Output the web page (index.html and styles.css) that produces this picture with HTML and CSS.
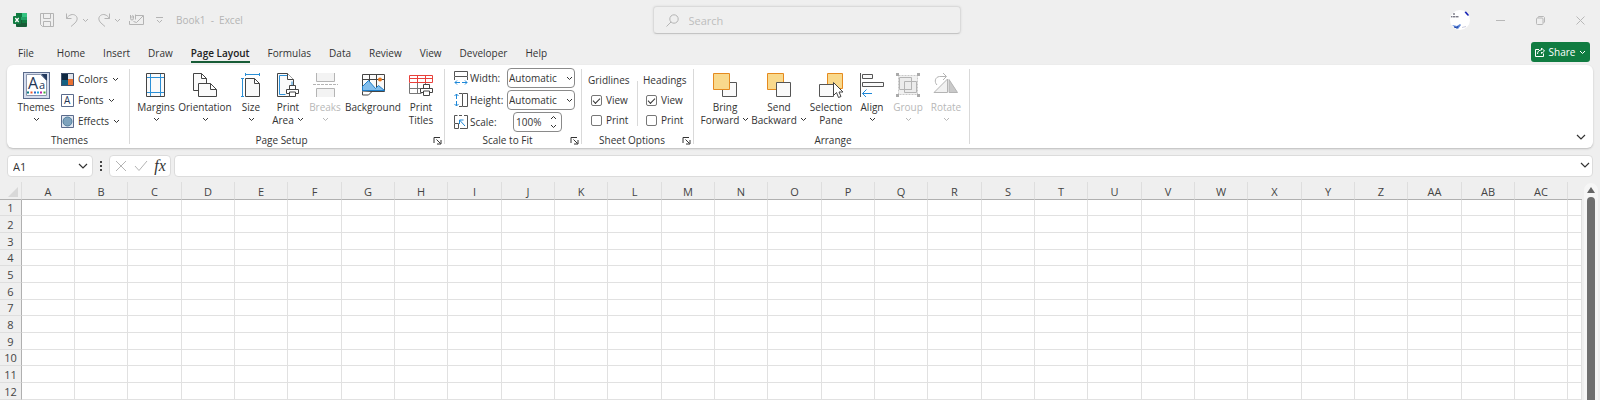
FILE: index.html
```html
<!DOCTYPE html>
<html lang="en">
<head>
    <meta charset="UTF-8">
    <meta name="viewport" content="width=device-width, initial-scale=1.0">
    <title>Book1 - Excel</title>
    <link rel="stylesheet" href="styles.css">
</head>
<body>
    <!-- shared shapes -->
    <svg class="defs" width="0" height="0" aria-hidden="true">
        <symbol id="chev" viewBox="0 0 7 5"><path d="M1 1l2.500 2.500L6 1" fill="none" stroke="currentColor"/></symbol>
        <symbol id="chevBig" viewBox="0 0 10 6"><path d="M1 1l4 4 4-4" fill="none" stroke="currentColor" stroke-width="1.200"/></symbol>
        <symbol id="launch" viewBox="0 0 9 9"><path d="M1 7V1.500h6M3.500 3.500l4 4M8 4v4H4" fill="none" stroke="currentColor"/></symbol>
        <symbol id="printer" viewBox="0 0 14 14"><path d="M3.500 5.500v-4h6v4M3.500 9.500h-3v-4h12v4h-3M3.500 8h6v4.500h-6z" fill="#fff" stroke="#444"/></symbol>
    </svg>

    <header class="titlebar">
        <div class="quick">
            <svg class="logo" width="14" height="14" viewBox="0 0 14 14"><rect x="3" width="11" height="14" rx="1" fill="#21a366"/><path d="M3 0h6v4H3z" fill="#107c41"/><path d="M9 0h4l1 1v3H9z" fill="#33c481"/><path d="M3 7h11v6l-1 1H4l-1-1z" fill="#185c37"/><path d="M9 7h5v3H9z" fill="#107c41"/><rect y="3" width="8" height="8" rx="1" fill="#107c41"/><path d="M2.300 5l3.400 4M5.700 5L2.300 9" stroke="#fff" stroke-width="1.200"/></svg>
            <button type="button" class="qbtn save" aria-label="Save"><svg width="14" height="14" viewBox="0 0 14 14"><path d="M.5.500h13v13h-11l-2-2zM3.500.500v5h7v-5M3.500 13.500v-5h7v5" fill="none" stroke="currentColor"/></svg></button>
            <button type="button" class="qbtn undo" aria-label="Undo"><svg width="14" height="14" viewBox="0 0 14 14"><path d="M1.500.500v5h5M1.500 5.500C4 1.500 8 .5 10.500 2.500s2 5-.5 7.500l-4 3.500" fill="none" stroke="currentColor"/></svg><svg width="7" height="5"><use href="#chev"/></svg></button>
            <button type="button" class="qbtn redo" aria-label="Redo"><svg width="14" height="14" viewBox="0 0 14 14"><path d="M12.500.500v5h-5M12.500 5.500C10 1.500 6 .5 3.500 2.500s-2 5 .5 7.500l4 3.500" fill="none" stroke="currentColor"/></svg><svg width="7" height="5"><use href="#chev"/></svg></button>
            <button type="button" class="qbtn mail" aria-label="Email"><svg width="15" height="12" viewBox="0 0 15 12"><path d="M7 1.500h7.500v9H.5V7M4.500 7.500l3 1 6.500-6.500M1.500 1v3.500a1.500 1.500 0 0 0 3 0V2a1 1 0 0 0-1.500 0v2.500M6.500.500v5" fill="none" stroke="currentColor"/></svg></button>
            <button type="button" class="qbtn more" aria-label="Customize Quick Access Toolbar"><svg width="7" height="7" viewBox="0 0 7 7"><path d="M0 .5h7M1 3l2.500 2.500L6 3" fill="none" stroke="currentColor"/></svg></button>
            <span class="doc">Book1&nbsp; -&nbsp; Excel</span>
        </div>
        <label class="search">
            <svg width="13" height="13" viewBox="0 0 13 13"><circle cx="8" cy="5" r="4.200" fill="none" stroke="currentColor"/><path d="M5 8L.5 12.500" stroke="currentColor"/></svg>
            <input type="text" placeholder="Search" aria-label="Search">
        </label>
        <div class="window">
            <svg class="avatar" width="20" height="20" viewBox="0 0 20 20"><circle cx="10" cy="10" r="10" fill="#fff"/><path d="M14.500 2l1.500-.5 3 3.500-1 1-2-2z" fill="#1420b4"/><path d="M3 4h2M1 6.800h1.500M3 6.800h2M5.500 6.800h3" stroke="#445"/><path d="M2 15l5 1 3-2 1 1-3 4q-3-1-6-4z" fill="#5b84d6"/><path d="M4 17l3 1 1-2" stroke="#2347a8" fill="none"/><path d="M12 17.500l4-1" stroke="#ccd"/></svg>
            <button type="button" class="wbtn" aria-label="Minimize"><svg width="9" height="9" viewBox="0 0 9 9"><path d="M0 4.500h9" stroke="currentColor"/></svg></button>
            <button type="button" class="wbtn" aria-label="Restore"><svg width="9" height="9" viewBox="0 0 9 9"><rect x=".5" y="2" width="6.500" height="6.500" rx="1" fill="none" stroke="currentColor"/><path d="M2 2V1l.5-.5H7.500l1 1V6L7.500 7" fill="none" stroke="currentColor"/></svg></button>
            <button type="button" class="wbtn" aria-label="Close"><svg width="9" height="9" viewBox="0 0 9 9"><path d="M.5.500l8 8M8.500.500l-8 8" stroke="currentColor"/></svg></button>
        </div>
    </header>

    <nav class="tabs">
        <a href="#" class="file">File</a>
        <a href="#">Home</a>
        <a href="#">Insert</a>
        <a href="#">Draw</a>
        <a href="#" class="active">Page Layout</a>
        <a href="#">Formulas</a>
        <a href="#">Data</a>
        <a href="#">Review</a>
        <a href="#">View</a>
        <a href="#">Developer</a>
        <a href="#">Help</a>
        <button type="button" class="share"><svg width="10" height="10" viewBox="0 0 10 10"><path d="M4 2.500H.5v7h8V6.500M2.500 7c0-3 2-4 4-4V1l3 3-3 2.500V5" fill="none" stroke="currentColor"/></svg>Share<svg width="7" height="5"><use href="#chev"/></svg></button>
    </nav>

    <main class="ribbon">
        <section class="group themes">
            <div class="tools">
                <button type="button" class="tool"><span class="icon"><svg width="27" height="27" viewBox="0 0 27 27"><rect x=".5" y=".5" width="26" height="26" fill="#d6dded" stroke="#5b6b8c"/><path d="M3.500 2.500h14l6 6v15h-20z" fill="#fff" stroke="#8a95ad"/><path d="M18 2h6v7z" fill="#243a5e"/><text x="5" y="17" class="glyph-lg">A</text><text x="16" y="17" class="glyph-md">a</text><path d="M4 20.500h2" stroke="#0a7c86" stroke-width="2"/><path d="M7.500 20.500h2" stroke="#f0562b" stroke-width="2"/><path d="M11 20.500h2" stroke="#2a66c8" stroke-width="2"/><path d="M14 20.500h2" stroke="#27a4d8" stroke-width="2"/><path d="M17 20.500h2" stroke="#c021a8" stroke-width="2"/><path d="M20.500 20.500h2" stroke="#3fa535" stroke-width="2"/></svg></span>Themes<svg class="down" width="7" height="5"><use href="#chev"/></svg></button>
                <div class="rows">
                    <button type="button" class="row"><svg width="13" height="13" viewBox="0 0 13 13"><path d="M0 0h7v7H0z" fill="#0e2841"/><path d="M7 0h6v7H7z" fill="#dfe3ea"/><path d="M0 7h7v6H0z" fill="#156082"/><path d="M7 6h6v7H7z" fill="#e97132"/><path d="M.5.500h12v12H.5z" fill="none" stroke="#42526e"/></svg>Colors<svg width="7" height="5"><use href="#chev"/></svg></button>
                    <button type="button" class="row"><svg width="13" height="13" viewBox="0 0 13 13"><path d="M.5.500h12v12H.5z" fill="#fff" stroke="#5b6b8c"/><text x="3" y="10" class="glyph-sm">A</text></svg>Fonts<svg width="7" height="5"><use href="#chev"/></svg></button>
                    <button type="button" class="row"><svg width="13" height="13" viewBox="0 0 13 13"><path d="M.5.500h12v12H.5z" fill="#e4e9f2" stroke="#5b6b8c"/><circle cx="6.500" cy="6.500" r="4.500" fill="#7fa3bd" stroke="#4f7d9c"/></svg>Effects<svg width="7" height="5"><use href="#chev"/></svg></button>
                </div>
            </div>
            <footer><h2>Themes</h2></footer>
        </section>

        <section class="group setup">
            <div class="tools">
                <button type="button" class="tool"><span class="icon"><svg width="20" height="24" viewBox="0 0 20 24"><path d="M.5.500h18v23H.5z" fill="#fafafa" stroke="#444"/><path d="M4.500 1v22M14.500 1v22M1 4.500h17M1 19.500h17" stroke="#2b8fd6"/></svg></span>Margins<svg class="down" width="7" height="5"><use href="#chev"/></svg></button>
                <button type="button" class="tool"><span class="icon"><svg width="24" height="24" viewBox="0 0 24 24"><path d="M.5.500h8l5 5v12H.5zM8.500.500v5h5" fill="#fafafa" stroke="#444"/><path d="M5.500 10.500h12l6 6v7h-18zM17.500 10.500v6h6" fill="#fafafa" stroke="#444"/></svg></span>Orientation<svg class="down" width="7" height="5"><use href="#chev"/></svg></button>
                <button type="button" class="tool"><span class="icon"><svg width="20" height="24" viewBox="0 0 20 24"><path d="M4.500 5.500h9l5 5v13h-14zM13.500 5.500v5h5" fill="#fafafa" stroke="#444"/><path d="M1.500 5v19M0 5.500h3M0 23.500h3M4 1.500h15M4.500 0v3M18.500 0v3" stroke="#2b8fd6"/></svg></span>Size<svg class="down" width="7" height="5"><use href="#chev"/></svg></button>
                <button type="button" class="tool"><span class="icon"><svg width="24" height="25" viewBox="0 0 24 25"><path d="M1.500.500h10l6 6v17h-16z" fill="#fafafa" stroke="#444"/><path d="M11.500 2.500h-8v19h6M16 8.500v4" fill="none" stroke="#2b8fd6"/><path d="M11.500.500v6h6" fill="#fff" stroke="#444"/><use href="#printer" x="10" y="11" width="14" height="14"/></svg></span><span>Print</span><span>Area<svg class="inline" width="7" height="5"><use href="#chev"/></svg></span></button>
                <button type="button" class="tool" disabled><span class="icon"><svg width="25" height="24" viewBox="0 0 25 24"><path d="M3.500 0v8.500h18V0M3.500 24v-8.500h18V24" fill="#f3f3f3" stroke="#b4b4b4"/><path d="M0 11.500h25" stroke="#b4b4b4" stroke-dasharray="3 1"/></svg></span>Breaks<svg class="down" width="7" height="5"><use href="#chev"/></svg></button>
                <button type="button" class="tool background"><span class="icon"><svg width="25" height="24" viewBox="0 0 25 24"><path d="M1.500 1.500h22v17h-22zM1 6.500h22M8.500 2v16M15.500 2v16" fill="#fafafa" stroke="#444"/><path d="M1.500 17.500v-4l6-6 7 8 3-3 6 5z" fill="#83beec" stroke="#1e7fcb"/><circle cx="19" cy="6.500" r="2" fill="#e8761a"/><path d="M1.500 18.500v3.500h6l3-3" fill="#fff" stroke="#444"/></svg></span>Background</button>
                <button type="button" class="tool"><span class="icon"><svg width="26" height="24" viewBox="0 0 26 24"><path d="M1.500 10v10.500h12M1.500 15.500h12M9.500 10v10M17.500 10v3" fill="none" stroke="#777"/><path d="M1.500 2.500h23v7h-23zM1 5.500h23M9.500 3v6M17.500 3v6" fill="#fff" stroke="#e8403a"/><use href="#printer" x="12" y="10" width="14" height="14"/></svg></span><span>Print</span><span>Titles</span></button>
            </div>
            <footer><h2>Page Setup</h2><button type="button" class="launcher" aria-label="Page Setup options"><svg width="9" height="9"><use href="#launch"/></svg></button></footer>
        </section>

        <section class="group scale">
            <div class="fields">
                <svg width="14" height="14" viewBox="0 0 14 14"><path d="M.5 5.500v-5h13v5zM.5 6v3M13.500 6v3" fill="none" stroke="#555"/><path d="M1 11.500h5M8 11.500h5M3 9.500l-2 2 2 2M11 9.500l2 2-2 2" fill="none" stroke="#1e88d8"/></svg>
                <label for="fitWidth">Width:</label>
                <div class="select"><select id="fitWidth"><option>Automatic</option></select><svg width="7" height="5"><use href="#chev"/></svg></div>
                <svg width="14" height="14" viewBox="0 0 14 14"><path d="M8.500.500h5v13h-5zM5 .5h3M5 13.500h3" fill="none" stroke="#555"/><path d="M2.500 1v5M2.500 8v5M.5 3l2-2 2 2M.5 11l2 2 2-2" fill="none" stroke="#1e88d8"/></svg>
                <label for="fitHeight">Height:</label>
                <div class="select"><select id="fitHeight"><option>Automatic</option></select><svg width="7" height="5"><use href="#chev"/></svg></div>
                <svg width="14" height="14" viewBox="0 0 14 14"><path d="M.5 8V.5h3M5 .5h3M10 .5h3.500v13H6M.5 8.500h4v5h-4z" fill="none" stroke="#555"/><path d="M11 11L5.500 5M5.500 9V5h4" fill="none" stroke="#1e88d8"/></svg>
                <label for="fitScale">Scale:</label>
                <div class="spin"><input type="text" id="fitScale" value="100%"><span><button type="button" aria-label="Increase"><svg class="up" width="7" height="5"><use href="#chev"/></svg></button><button type="button" aria-label="Decrease"><svg width="7" height="5"><use href="#chev"/></svg></button></span></div>
            </div>
            <footer><h2>Scale to Fit</h2><button type="button" class="launcher" aria-label="Scale to Fit options"><svg width="9" height="9"><use href="#launch"/></svg></button></footer>
        </section>

        <section class="group sheet-options">
            <div class="checks">
                <fieldset>
                    <legend>Gridlines</legend>
                    <label><input type="checkbox" checked>View</label>
                    <label><input type="checkbox">Print</label>
                </fieldset>
                <fieldset>
                    <legend>Headings</legend>
                    <label><input type="checkbox" checked>View</label>
                    <label><input type="checkbox">Print</label>
                </fieldset>
            </div>
            <footer><h2>Sheet Options</h2><button type="button" class="launcher" aria-label="Sheet options"><svg width="9" height="9"><use href="#launch"/></svg></button></footer>
        </section>

        <section class="group arrange">
            <div class="tools">
                <button type="button" class="tool"><span class="icon"><svg width="24" height="24" viewBox="0 0 24 24"><path d="M9.500 9.500h14v14h-14z" fill="#fafafa" stroke="#555"/><path d="M.5.500h16v16H.5z" fill="#f9d98c" stroke="#e58a1f"/></svg></span><span>Bring</span><span>Forward<svg class="inline" width="7" height="5"><use href="#chev"/></svg></span></button>
                <button type="button" class="tool"><span class="icon"><svg width="24" height="24" viewBox="0 0 24 24"><path d="M.5.500h16v16H.5z" fill="#f9d98c" stroke="#e58a1f"/><path d="M9.500 9.500h14v14h-14z" fill="#fafafa" stroke="#555"/></svg></span><span>Send</span><span>Backward<svg class="inline" width="7" height="5"><use href="#chev"/></svg></span></button>
                <button type="button" class="tool"><span class="icon"><svg width="25" height="26" viewBox="0 0 25 26"><path d="M8.500 1.500h15v15h-15z" fill="#f9d98c" stroke="#e58a1f"/><path d="M.5 12.500h14v12H.5z" fill="#fafafa" stroke="#555"/><path d="M14.500 10.500v13l3-3 2 5 2.500-1-2-4.500h4z" fill="#fff" stroke="#444"/></svg></span><span>Selection</span><span>Pane</span></button>
                <button type="button" class="tool"><span class="icon"><svg width="24" height="24" viewBox="0 0 24 24"><path d="M.5 0v24" stroke="#555"/><path d="M2.500 1.500h10v4h-10zM2.500 9.500h21v4h-21z" fill="#fafafa" stroke="#555"/><path d="M2.500 20.500H12M6.500 16.500l-4 4 4 4" fill="none" stroke="#1e88d8"/></svg></span>Align<svg class="down" width="7" height="5"><use href="#chev"/></svg></button>
                <button type="button" class="tool" disabled><span class="icon"><svg width="24" height="24" viewBox="0 0 24 24"><path d="M2.500 2.500h19v19h-19z" fill="#f1f1f1" stroke="#c8c8c8" stroke-dasharray="2 1"/><path d="M3.500 4.500h12v12h-12zM8.500 8.500h12v11h-12z" fill="#ececec" stroke="#b4b4b4"/><path d="M8.500 16.500h7v-8" fill="none" stroke="#b4b4b4"/><path d="M0 0h3v3H0zM21 0h3v3h-3zM0 21h3v3H0zM21 21h3v3h-3z" fill="#aaa"/></svg></span>Group<svg class="down" width="7" height="5"><use href="#chev"/></svg></button>
                <button type="button" class="tool" disabled><span class="icon"><svg width="26" height="24" viewBox="0 0 26 24"><path d="M1 19.500L14.500 6v13.500z" fill="#f1f1f1" stroke="#b4b4b4"/><path d="M16 6.500l8.500 13H16z" fill="#c9c9c9" stroke="#b4b4b4"/><path d="M4 12C1 9 2 4 6.500 3.500H13M10 0l3.500 3.500L10 7" fill="none" stroke="#b4b4b4"/></svg></span>Rotate<svg class="down" width="7" height="5"><use href="#chev"/></svg></button>
            </div>
            <footer><h2>Arrange</h2></footer>
        </section>

        <button type="button" class="collapse" aria-label="Collapse the ribbon"><svg width="10" height="6"><use href="#chevBig"/></svg></button>
    </main>

    <div class="formula">
        <div class="namebox"><input type="text" value="A1" aria-label="Name box"><svg width="10" height="6"><use href="#chevBig"/></svg></div>
        <svg class="dots" width="2" height="10" viewBox="0 0 2 10"><path d="M0 0h2v2H0zM0 4h2v2H0zM0 8h2v2H0z" fill="#444"/></svg>
        <div class="entry">
            <button type="button" aria-label="Cancel" disabled><svg width="12" height="12" viewBox="0 0 12 12"><path d="M1 1l10 10M11 1L1 11" stroke="currentColor"/></svg></button>
            <button type="button" aria-label="Enter" disabled><svg width="14" height="12" viewBox="0 0 14 12"><path d="M1 6l4 4.500L13 1" fill="none" stroke="currentColor"/></svg></button>
            <button type="button" class="fx" aria-label="Insert function"><i>fx</i></button>
        </div>
        <div class="bar"><input type="text" aria-label="Formula bar"><svg width="10" height="6"><use href="#chevBig"/></svg></div>
    </div>

    <div class="workspace">
        <table class="grid">
            <colgroup id="cols"></colgroup>
            <thead><tr id="heads"></tr></thead>
            <tbody id="cells"></tbody>
        </table>
        <div class="scrollbar">
            <svg width="8" height="6" viewBox="0 0 8 6"><path d="M4 0l4 6H0z" fill="#666"/></svg>
            <div class="thumb"></div>
        </div>
    </div>

    <script>
        const columnCount = 29;
        const rowCount = 12;

        // 0 -> A, 25 -> Z, 26 -> AA
        function columnName(i) {
            return (i > 25 ? 'A' : '') + String.fromCharCode(65 + i % 26);
        }

        let cols = '<col class="corner-col">';
        let heads = '<th class="corner"><svg width="10" height="10" viewBox="0 0 10 10"><path d="M10 0v10H0z" fill="#d8d8d8"/></svg></th>';
        for (let i = 0; i < columnCount; i++) {
            cols += '<col class="col">';
            heads += `<th scope="col">${columnName(i)}</th>`;
        }
        document.getElementById('cols').innerHTML = cols + '<col>';
        document.getElementById('heads').innerHTML = heads + '<th></th>';

        let rows = '';
        for (let r = 1; r <= rowCount; r++) {
            rows += `<tr><th scope="row">${r}</th>${'<td></td>'.repeat(columnCount + 1)}</tr>`;
        }
        document.getElementById('cells').innerHTML = rows;
    </script>
</body>
</html>
```
FILE: styles.css
```css
* {
    box-sizing: border-box;
}
body {
    margin: 0;
    min-height: 100vh;
    display: flex;
    flex-direction: column;
    overflow: hidden;
    background: #efefef;
    color: #333;
    font-family: "Open Sans", "Noto Sans", sans-serif;
    font-size: 10px;
    line-height: 13px;
}
button, input, select {
    margin: 0;
    padding: 0;
    border: 0;
    background: none;
    color: inherit;
    font: inherit;
}
svg {
    display: block;
    flex: none;
}
.defs {
    position: absolute;
}

/* title bar */
.titlebar {
    display: grid;
    grid-template-columns: 1fr 308px 1fr;
    align-items: center;
    height: 40px;
    padding-left: 13px;
    color: #b4b4b4;
}
.quick, .window, .qbtn {
    display: flex;
    align-items: center;
}
.qbtn {
    gap: 3px;
}
.save {
    margin-left: 13px;
}
.undo {
    margin-left: 11px;
}
.redo {
    margin-left: 8px;
}
.mail {
    margin-left: 8px;
}
.more {
    margin-left: 12px;
}
.doc {
    margin-left: 13px;
}
.search {
    display: flex;
    align-items: center;
    gap: 10px;
    height: 28px;
    padding: 0 12px;
    border: 1px solid #dadada;
    border-bottom-color: #c4c4c4;
    border-radius: 4px;
    box-shadow: 0 0 2px #d4d4d4;
}
.search input {
    flex: 1;
    font-size: 11px;
    outline: 0;
}
.search input::placeholder {
    color: #bdbdbd;
}
.window {
    justify-content: flex-end;
}
.avatar {
    margin-right: 10px;
}
.wbtn {
    display: flex;
    justify-content: center;
    width: 40px;
    color: #b8b8b8;
}

/* tabs */
.tabs {
    display: flex;
    gap: 18px;
    height: 25px;
    padding: 0 10px 3px 18px;
}
.tabs a {
    padding-top: 7px;
    height: 23px;
    color: #333;
    text-decoration: none;
}
.tabs .file {
    margin-right: 5px;
}
.tabs .active {
    border-bottom: 2px solid #185c37;
    color: #222;
    font-weight: 600;
}
.share {
    display: flex;
    align-items: center;
    justify-content: center;
    gap: 4px;
    width: 59px;
    height: 20px;
    margin: 2px 0 0 auto;
    border-radius: 3px;
    background: #107c41;
    color: #fff;
}

/* ribbon */
.ribbon {
    display: flex;
    height: 83px;
    margin: 0 7px;
    border-radius: 6px;
    background: #fff;
    box-shadow: 0 1px 2px #bbb;
}
.group {
    display: flex;
    flex-direction: column;
    justify-content: space-between;
    padding-top: 6px;
    background: linear-gradient(#d9d9d9, #d9d9d9) right 4px / 1px 75px no-repeat;
    background-position: right 0 top 4px;
}
.themes {
    width: 123px;
}
.setup {
    width: 315px;
}
.scale {
    width: 137px;
}
.sheet-options {
    width: 112px;
}
.arrange {
    width: 276px;
}
.group footer {
    display: flex;
    align-items: center;
    height: 15px;
    padding-right: 2px;
}
.themes footer, .arrange footer {
    padding: 0 0 0 2px;
}
.group h2 {
    flex: 1;
    margin: 0;
    font-size: 10px;
    font-weight: 400;
    text-align: center;
}
.launcher {
    width: 10px;
}
.tools {
    display: grid;
}
.themes .tools {
    grid-template-columns: 50px 1fr;
    padding-left: 4px;
}
.setup .tools {
    grid-template-columns: 40px 58px 34px 40px 34px 62px 34px;
    padding-left: 6px;
}
.arrange .tools {
    grid-template-columns: 50px 58px 46px 36px 36px 40px;
    padding-left: 6px;
}
.tool {
    display: flex;
    flex-direction: column;
    align-items: center;
    height: 56px;
    white-space: nowrap;
}
.tool:disabled {
    color: #b8b8b8;
}
.icon {
    display: flex;
    align-items: center;
    height: 28px;
    margin-bottom: 2px;
}
.down {
    margin-top: 3px;
}
.inline {
    display: inline-block;
    margin: 0 0 2px 3px;
}
.glyph-lg, .glyph-md, .glyph-sm {
    font-size: 16px;
    fill: #1f3554;
}
.glyph-md {
    font-size: 11px;
}
.glyph-sm {
    font-size: 10px;
}
.rows {
    display: grid;
    grid-template-rows: 16px 26px 17px;
    align-items: center;
}
.row {
    display: flex;
    align-items: center;
    gap: 4px;
}

/* scale to fit */
.fields {
    display: grid;
    grid-template-columns: 14px 35px 68px;
    grid-template-rows: 20px 20px 20px;
    gap: 2px;
    align-items: center;
    margin-top: -3px;
    padding-left: 9px;
}
.select {
    display: grid;
    align-items: center;
    height: 20px;
    border: 1px solid #8a8a8a;
    border-radius: 4px;
}
.select > * {
    grid-area: 1 / 1;
}
.select select {
    padding-left: 1px;
    appearance: none;
}
.select svg {
    justify-self: end;
    margin-right: 1px;
    pointer-events: none;
}
.spin {
    display: flex;
    align-items: center;
    width: 49px;
    height: 20px;
    margin-left: 6px;
    padding: 0 4px 0 2px;
    border: 1px solid #8a8a8a;
    border-radius: 4px;
}
.spin input {
    flex: 1;
    width: 20px;
}
.spin button {
    display: block;
    padding: 2px 0;
}
.up {
    transform: rotate(180deg);
}

/* sheet options */
.checks {
    display: flex;
    margin-top: 3px;
}
fieldset {
    display: flex;
    flex-direction: column;
    gap: 7px;
    width: 55px;
    height: 52px;
    margin: 0;
    padding: 0 0 0 9px;
    border: 0;
    border-right: 1px solid #d9d9d9;
}
fieldset:first-child {
    width: 56px;
}
fieldset:last-child {
    border: 0;
    padding-left: 8px;
}
legend {
    margin: 0 0 7px -3px;
    padding: 0;
}
fieldset label {
    display: flex;
    align-items: center;
    gap: 4px;
}
fieldset input {
    width: 11px;
    height: 11px;
    border: 1px solid #777;
    border-radius: 2px;
    appearance: none;
}
fieldset input:checked::before {
    content: "";
    display: block;
    width: 6px;
    height: 3px;
    margin: 2px 1px;
    border: solid #333;
    border-width: 0 0 1px 1px;
    transform: rotate(-45deg);
}
.collapse {
    align-self: flex-end;
    margin: 0 7px 8px auto;
}

/* formula bar */
.formula {
    display: flex;
    align-items: center;
    height: 22px;
    margin: 7px 7px 0;
}
.namebox, .entry, .bar {
    display: flex;
    align-items: center;
    height: 22px;
    border: 1px solid #dcdcdc;
    border-radius: 4px;
    background: #fff;
}
.namebox {
    width: 86px;
    padding: 0 4px 0 5px;
}
.namebox input {
    flex: 1;
    width: 20px;
    font-size: 11px;
}
.dots {
    margin: 0 7px;
}
.entry {
    justify-content: space-around;
    width: 62px;
    padding: 0 1px 0 2px;
}
.entry button:disabled {
    color: #b4b4b4;
}
.entry .fx {
    font: 16px/18px "Liberation Serif", serif;
}
.bar {
    flex: 1;
    margin-left: 3px;
    padding: 0 2px 3px 4px;
}
.bar input {
    flex: 1;
    outline: 0;
}

/* sheet */
.workspace {
    display: flex;
    flex: 1;
    margin-top: 5px;
}
.grid {
    flex: 1;
    width: 0;
    align-self: flex-start;
    table-layout: fixed;
    border-collapse: separate;
    border-spacing: 0;
    font-size: 11px;
}
.corner-col {
    width: 22px;
}
.col {
    width: 53px;
}
.col:nth-child(3n+1) {
    width: 54px;
}
.grid th {
    padding: 0;
    font-weight: 400;
    color: #444;
    line-height: 14px;
}
.grid thead th {
    height: 18px;
    padding-top: 2px;
    border-right: 1px solid #dedede;
    border-bottom: 1px solid #b0b0b0;
}
.grid thead th:last-child {
    border-right: 0;
}
.corner svg {
    margin: 0 0 0 8px;
}
.grid tbody th {
    padding-top: 1px;
    border-right: 1px solid #b0b0b0;
    border-bottom: 1px solid #dedede;
}
.grid tbody tr {
    height: 17px;
}
.grid tbody tr:nth-child(3n+1) {
    height: 16px;
}
.grid td {
    padding: 0;
    border-right: 1px solid #e1e1e1;
    border-bottom: 1px solid #e1e1e1;
    background: #fff;
}
.scrollbar {
    display: flex;
    flex-direction: column;
    align-items: center;
    gap: 4px;
    width: 14px;
    margin: 1px 2px 0;
    padding-top: 4px;
    border-radius: 7px 7px 0 0;
    background: #f6f6f6;
}
.thumb {
    flex: 1;
    width: 8px;
    border-radius: 4px 4px 0 0;
    background: #6f6f6f;
}
```
